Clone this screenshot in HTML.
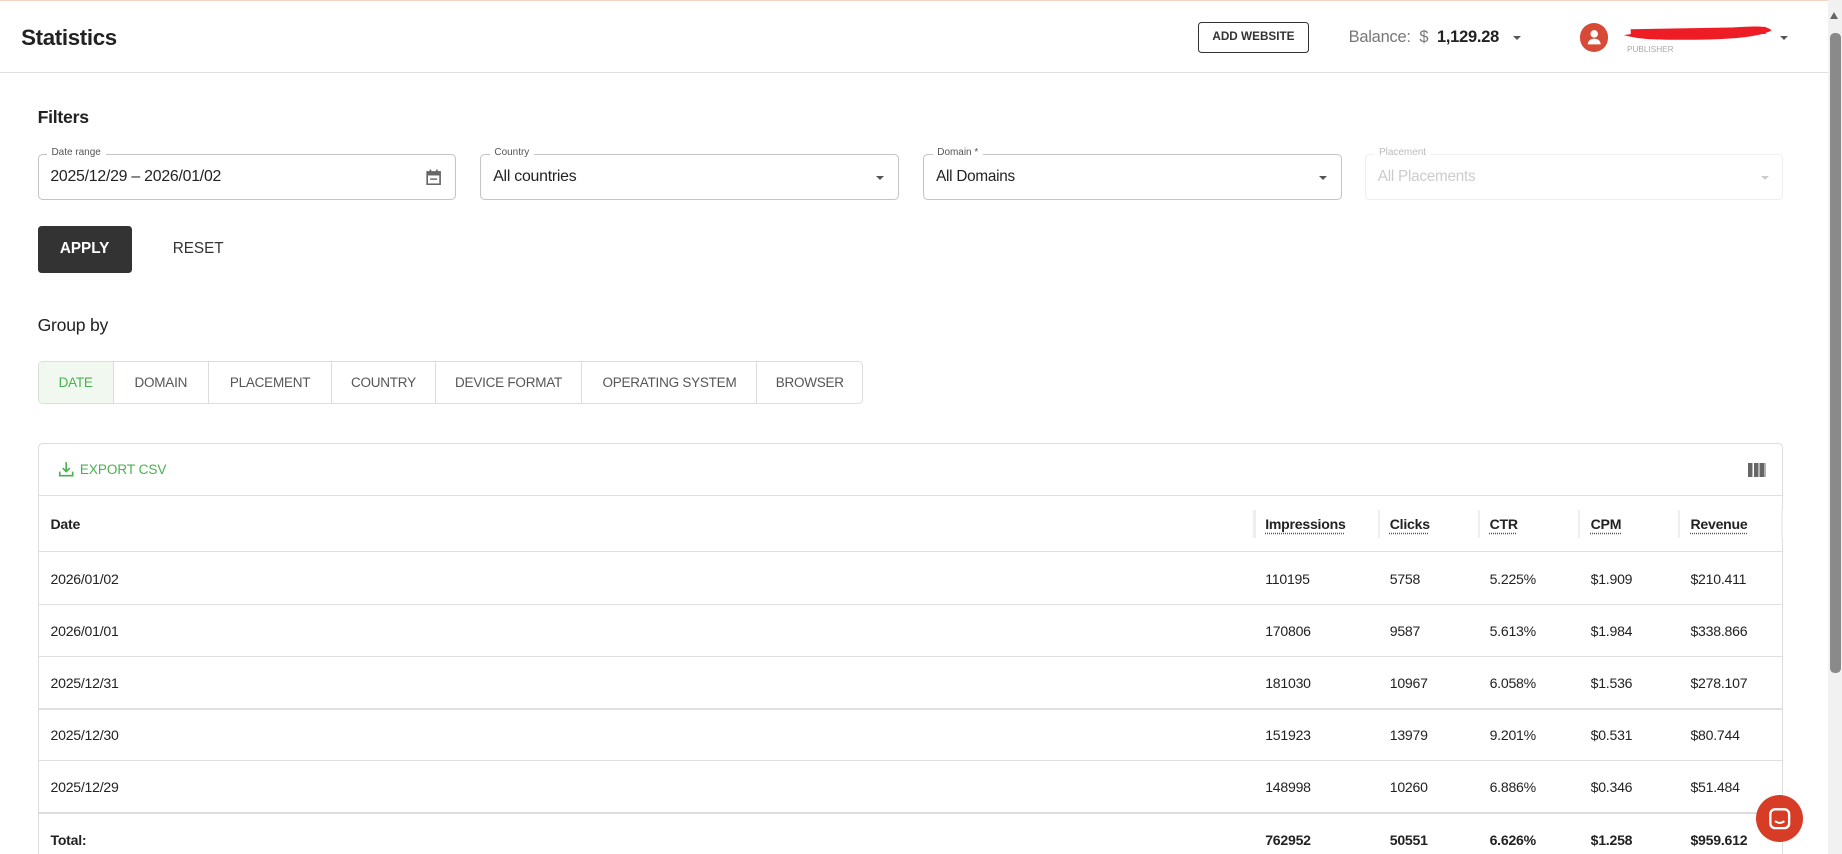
<!DOCTYPE html>
<html><head><meta charset="utf-8"><style>
html,body{margin:0;padding:0;background:#fff;overflow:hidden}
body{width:1568px;height:727px;zoom:1.17475;position:relative;font-family:"Liberation Sans",sans-serif;color:#222}
.a{position:absolute;white-space:nowrap}
.fld{position:absolute;top:131px;height:39px;border:1px solid #c4c4c4;border-radius:4px;box-sizing:border-box;width:356px}
.lbl{position:absolute;top:-7px;left:7px;background:#fff;padding:0 4px;font-size:8.5px;color:#555}
.val{position:absolute;left:10px;top:11px;font-size:13.5px;color:#222;letter-spacing:-0.2px}
.caret{position:absolute;width:0;height:0;border-left:4px solid transparent;border-right:4px solid transparent;border-top:4px solid #555}
.tabs{position:absolute;left:32px;top:307px;height:35px;border:1px solid #ddd;border-radius:4px;display:flex;overflow:hidden}
.tabs div{box-sizing:border-box;border-right:1px solid #ddd;font-size:11.5px;color:#555;display:flex;align-items:center;justify-content:center;height:35px;letter-spacing:-0.2px}
.tabs div:last-child{border-right:none}
.card{position:absolute;left:32px;top:377px;width:1486px;height:360px;border:1px solid #ddd;border-radius:4px;box-sizing:border-box}
.hl{position:absolute;left:32px;width:1486px;height:1px;background:#e0e0e0}
.c{position:absolute;font-size:12px;color:#222;letter-spacing:-0.2px}
.h{font-weight:bold;text-decoration:underline dotted #555;text-underline-offset:3px}
.sep{position:absolute;top:434px;width:2px;height:24px;background:#eee}
</style></head><body>
<div class="a" style="left:0;top:0;width:1556px;height:1px;background:#f6d3c4"></div>
<div class="a" style="left:18px;top:21px;font-size:19px;font-weight:bold;color:#222;letter-spacing:-0.3px">Statistics</div>
<div class="a" style="left:1020px;top:19px;width:94px;height:26px;border:1px solid #333;border-radius:3px;box-sizing:border-box;font-size:10px;font-weight:bold;color:#333;text-align:center;line-height:24px">ADD WEBSITE</div>
<div class="a" style="left:1148px;top:24px;font-size:14px;color:#777;letter-spacing:-0.2px">Balance:&nbsp; $ &nbsp;<b style="color:#222">1,129.28</b></div>
<div class="caret" style="left:1288px;top:31px"></div>
<div class="a" style="left:1345px;top:20px;width:24px;height:24px;border-radius:50%;background:#d84a38"></div>
<svg class="a" style="left:1350px;top:24px" width="14" height="16" viewBox="0 0 14 16"><circle cx="7" cy="5" r="3.2" fill="#fff"/><path d="M1.5 14c0-3.5 3-5 5.5-5s5.5 1.5 5.5 5z" fill="#fff"/></svg>
<svg class="a" style="left:1378px;top:18px" width="135" height="22" viewBox="0 0 135 22"><path d="M4 12 C30 8,60 8,90 6 S125 4,130 8 C120 14,90 16,60 16 S20 16,4 12Z" fill="#ee1c24"/><path d="M10 10 L125 8" stroke="#ee1c24" stroke-width="6"/></svg>
<div class="a" style="left:1385px;top:38px;font-size:7px;color:#aaa">PUBLISHER</div>
<div class="caret" style="left:1515px;top:31px"></div>
<div class="a" style="left:0;top:61px;width:1556px;height:1px;background:#e0e0e0"></div>
<div class="a" style="left:1556px;top:0;width:12px;height:727px;background:#f1f1f1"></div>
<div class="a" style="left:1558px;top:28px;width:9px;height:545px;background:#8a8a8a;border-radius:4px"></div>
<div class="a" style="left:1558px;top:10px;width:0;height:0;border-left:4px solid transparent;border-right:4px solid transparent;border-bottom:6px solid #666"></div>

<div class="a" style="left:32px;top:91px;font-size:15px;font-weight:bold;color:#222;letter-spacing:-0.2px">Filters</div>
<div class="fld" style="left:32px"><span class="lbl">Date range</span><span class="val">2025/12/29 – 2026/01/02</span>
<svg style="position:absolute;left:330px;top:12px" width="13" height="14" viewBox="0 0 13 14"><rect x="1" y="2.5" width="11" height="10.5" fill="none" stroke="#666" stroke-width="1.4"/><rect x="1" y="2.5" width="11" height="3" fill="#666"/><rect x="3" y="0.5" width="1.5" height="3" fill="#666"/><rect x="8.5" y="0.5" width="1.5" height="3" fill="#666"/><rect x="3.5" y="8" width="6" height="1.2" fill="#666"/></svg></div>
<div class="fld" style="left:409px"><span class="lbl">Country</span><span class="val">All countries</span><div class="caret" style="left:336px;top:18px"></div></div>
<div class="fld" style="left:786px"><span class="lbl">Domain *</span><span class="val" style="font-size:13px">All Domains</span><div class="caret" style="left:336px;top:18px"></div></div>
<div class="fld" style="left:1162px;border-color:#eee"><span class="lbl" style="color:#bbb">Placement</span><span class="val" style="color:#ccc;font-size:13px">All Placements</span><div class="caret" style="left:336px;top:18px;border-top-color:#ccc"></div></div>

<div class="a" style="left:32px;top:192px;width:80px;height:40px;background:#333;border-radius:3px;color:#fff;font-size:13px;font-weight:bold;text-align:center;line-height:40px">APPLY</div>
<div class="a" style="left:147px;top:204px;font-size:13px;color:#333">RESET</div>

<div class="a" style="left:32px;top:268px;font-size:15px;color:#222;letter-spacing:-0.2px">Group by</div>
<div class="tabs">
<div style="width:64px;background:#f1f8f0;color:#4caf50">DATE</div>
<div style="width:81px">DOMAIN</div>
<div style="width:105px">PLACEMENT</div>
<div style="width:88px">COUNTRY</div>
<div style="width:125px">DEVICE FORMAT</div>
<div style="width:149px">OPERATING SYSTEM</div>
<div style="width:89px">BROWSER</div>
</div>

<div class="card"></div>
<svg class="a" style="left:49px;top:392px" width="14" height="14" viewBox="0 0 14 14"><path d="M7 1v8M4 6l3 3 3-3M1.5 9v3.5h11V9" fill="none" stroke="#4caf50" stroke-width="1.4"/></svg>
<div class="a" style="left:68px;top:393px;font-size:11.5px;color:#4caf50">EXPORT CSV</div>
<div class="a" style="left:1488px;top:394px;width:15px;height:12px;background:repeating-linear-gradient(90deg,#666 0 4px,#fff 4px 5px)"></div>
<div class="hl" style="top:421px"></div>
<div class="c" style="left:43px;top:439px;font-weight:bold">Date</div>
<div class="sep" style="left:1067px"></div><div class="sep" style="left:1173px"></div><div class="sep" style="left:1258px"></div><div class="sep" style="left:1343px"></div><div class="sep" style="left:1428px"></div><div class="sep" style="left:1516px"></div>
<div class="c h" style="left:1077px;top:439px">Impressions</div>
<div class="c h" style="left:1183px;top:439px">Clicks</div>
<div class="c h" style="left:1268px;top:439px">CTR</div>
<div class="c h" style="left:1354px;top:439px">CPM</div>
<div class="c h" style="left:1439px;top:439px">Revenue</div>
<div class="hl" style="top:469px"></div>

<div class="c" style="left:43px;top:486px">2026/01/02</div><div class="c" style="left:1077px;top:486px">110195</div><div class="c" style="left:1183px;top:486px">5758</div><div class="c" style="left:1268px;top:486px">5.225%</div><div class="c" style="left:1354px;top:486px">$1.909</div><div class="c" style="left:1439px;top:486px">$210.411</div>
<div class="hl" style="top:514px"></div>
<div class="c" style="left:43px;top:530px">2026/01/01</div><div class="c" style="left:1077px;top:530px">170806</div><div class="c" style="left:1183px;top:530px">9587</div><div class="c" style="left:1268px;top:530px">5.613%</div><div class="c" style="left:1354px;top:530px">$1.984</div><div class="c" style="left:1439px;top:530px">$338.866</div>
<div class="hl" style="top:558px"></div>
<div class="c" style="left:43px;top:575px">2025/12/31</div><div class="c" style="left:1077px;top:575px">181030</div><div class="c" style="left:1183px;top:575px">10967</div><div class="c" style="left:1268px;top:575px">6.058%</div><div class="c" style="left:1354px;top:575px">$1.536</div><div class="c" style="left:1439px;top:575px">$278.107</div>
<div class="hl" style="top:603px"></div>
<div class="c" style="left:43px;top:619px">2025/12/30</div><div class="c" style="left:1077px;top:619px">151923</div><div class="c" style="left:1183px;top:619px">13979</div><div class="c" style="left:1268px;top:619px">9.201%</div><div class="c" style="left:1354px;top:619px">$0.531</div><div class="c" style="left:1439px;top:619px">$80.744</div>
<div class="hl" style="top:647px"></div>
<div class="c" style="left:43px;top:663px">2025/12/29</div><div class="c" style="left:1077px;top:663px">148998</div><div class="c" style="left:1183px;top:663px">10260</div><div class="c" style="left:1268px;top:663px">6.886%</div><div class="c" style="left:1354px;top:663px">$0.346</div><div class="c" style="left:1439px;top:663px">$51.484</div>
<div class="hl" style="top:691px;height:2px;background:#ddd"></div>
<div class="c" style="left:43px;top:708px;font-weight:bold">Total:</div><div class="c" style="left:1077px;top:708px;font-weight:bold">762952</div><div class="c" style="left:1183px;top:708px;font-weight:bold">50551</div><div class="c" style="left:1268px;top:708px;font-weight:bold">6.626%</div><div class="c" style="left:1354px;top:708px;font-weight:bold">$1.258</div><div class="c" style="left:1439px;top:708px;font-weight:bold">$959.612</div>

<div class="a" style="left:1495px;top:677px;width:40px;height:40px;border-radius:50%;background:#d63c26"></div>
<svg class="a" style="left:1505px;top:687px" width="20" height="20" viewBox="0 0 20 20"><rect x="2" y="2" width="16" height="16" rx="4" fill="none" stroke="#fff" stroke-width="2"/><path d="M6 12c2.5 2 5.5 2 8 0" fill="none" stroke="#fff" stroke-width="1.8"/></svg>
</body></html>
